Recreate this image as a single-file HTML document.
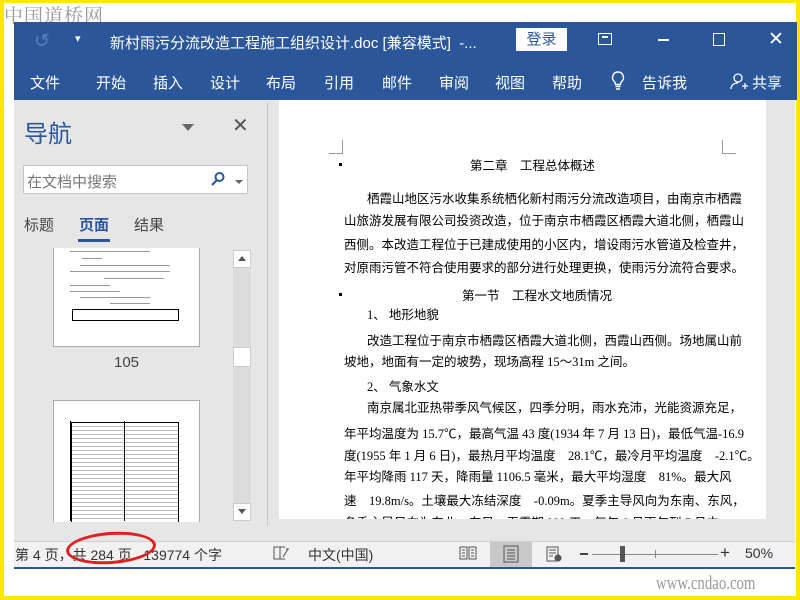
<!DOCTYPE html>
<html><head><meta charset="utf-8"><style>
*{margin:0;padding:0;box-sizing:border-box}
body{width:800px;height:600px;position:relative;overflow:hidden;background:#fff;font-family:"Liberation Sans","Microsoft YaHei","Noto Sans CJK SC",sans-serif}
.a{position:absolute;white-space:nowrap}
.w{color:#fff}
.doc{font-family:"Liberation Serif","Noto Sans CJK SC",sans-serif;font-size:12.5px;color:#000}
.ln{position:absolute;left:344px;width:377px;text-align:justify;text-align-last:justify;white-space:nowrap;line-height:16px}
</style></head><body>
<div class="a" style="left:0;top:0;width:800px;height:600px;border:4px solid #ffe800;border-top:3px solid #ffe800;border-bottom:4px solid #ffe800"></div>
<div class="a" style="left:4px;top:1px;font-size:19px;color:#9a9a9a;font-family:'Noto Serif CJK SC',serif;letter-spacing:1px">中国道桥网</div>
<div class="a" style="left:14px;top:22px;width:783px;height:78px;background:#2b579a"></div>
<div class="a" style="left:34px;top:30px;font-size:19px;color:#5b7fb8">↺</div>
<div class="a w" style="left:75px;top:32px;font-size:11px">▾</div>
<div class="a w" style="left:110px;top:32px;font-size:15px">新村雨污分流改造工程施工组织设计.doc [兼容模式]&nbsp; -...</div>
<div class="a" style="left:516px;top:28px;width:51px;height:23px;background:#fff;color:#2b579a;font-size:15px;text-align:center;line-height:23px">登录</div>
<div class="a" style="left:598px;top:33px;width:14px;height:12px;border:1.5px solid #fff"></div>
<div class="a" style="left:602px;top:36px;width:6px;height:1.5px;background:#fff"></div>
<div class="a" style="left:658px;top:39px;width:11px;height:1.5px;background:#fff"></div>
<div class="a" style="left:713px;top:33px;width:12px;height:13px;border:1.5px solid #fff"></div>
<div class="a w" style="left:768px;top:28px;font-size:19px;font-weight:300">✕</div>
<div class="a w" style="top:72px;font-size:15px;left:30px">文件</div>
<div class="a w" style="top:72px;font-size:15px;left:96px">开始</div>
<div class="a w" style="top:72px;font-size:15px;left:153px">插入</div>
<div class="a w" style="top:72px;font-size:15px;left:210px">设计</div>
<div class="a w" style="top:72px;font-size:15px;left:266px">布局</div>
<div class="a w" style="top:72px;font-size:15px;left:324px">引用</div>
<div class="a w" style="top:72px;font-size:15px;left:382px">邮件</div>
<div class="a w" style="top:72px;font-size:15px;left:439px">审阅</div>
<div class="a w" style="top:72px;font-size:15px;left:495px">视图</div>
<div class="a w" style="top:72px;font-size:15px;left:552px">帮助</div>
<svg class="a" style="left:610px;top:70px" width="16" height="22"><path d="M8 2a5.5 5.5 0 0 0-3.5 9.7c.8.8 1 1.6 1 2.8h5c0-1.2.2-2 1-2.8A5.5 5.5 0 0 0 8 2zM5.5 16.5h5M6 19h4" fill="none" stroke="#fff" stroke-width="1.4"/></svg>
<div class="a w" style="top:72px;font-size:15px;left:642px">告诉我</div>
<svg class="a" style="left:729px;top:72px" width="20" height="20"><circle cx="9" cy="6" r="4" fill="none" stroke="#fff" stroke-width="1.3"/><path d="M2 17c0-4 3-6 7-6M13 14h6M16 11v6" fill="none" stroke="#fff" stroke-width="1.3"/></svg>
<div class="a w" style="top:72px;font-size:15px;left:752px">共享</div>
<div class="a" style="left:14px;top:100px;width:781px;height:441px;background:#e6e6e6"></div>
<div class="a" style="left:267px;top:102px;width:1px;height:424px;background:#c8c8c8"></div>
<div class="a" style="left:24px;top:114px;font-size:24px;color:#2b579a">导航</div>
<div class="a" style="left:182px;top:124px;width:0;height:0;border-left:6px solid transparent;border-right:6px solid transparent;border-top:7px solid #666"></div>
<div class="a" style="left:232px;top:113px;font-size:20px;color:#555">✕</div>
<div class="a" style="left:23px;top:165px;width:225px;height:29px;background:#fff;border:1px solid #c6c6c6"></div>
<div class="a" style="left:27px;top:171px;font-size:15px;color:#777">在文档中搜索</div>
<svg class="a" style="left:210px;top:171px" width="16" height="16"><circle cx="9.5" cy="6" r="4" fill="none" stroke="#2b579a" stroke-width="2"/><path d="M7 9l-5 5" stroke="#2b579a" stroke-width="2.2"/></svg>
<div class="a" style="left:235px;top:180px;border-left:4px solid transparent;border-right:4px solid transparent;border-top:4px solid #666"></div>
<div class="a" style="left:24px;top:214px;font-size:15px;color:#444">标题</div>
<div class="a" style="left:79px;top:214px;font-size:15px;color:#2b579a;font-weight:bold">页面</div>
<div class="a" style="left:134px;top:214px;font-size:15px;color:#444">结果</div>
<div class="a" style="left:78px;top:239px;width:32px;height:3px;background:#2b579a"></div>
<div class="a" style="left:53px;top:248px;width:147px;height:99px;background:#fff;border:1px solid #aaa;border-top:none;overflow:hidden">
<div style="margin:3px 16px;height:1px;background:#999;width:80px"></div>
<div style="margin:6px 28px;height:1px;background:#999;width:20px"></div>
<div style="margin:5px 26px;height:1px;background:#999;width:90px"></div>
<div style="margin:5px 16px;height:1px;background:#999;width:100px"></div>
<div style="margin:6px 50px;height:1px;background:#999;width:60px"></div>
<div style="margin:5px 16px;height:1px;background:#999;width:40px"></div>
<div style="margin:5px 16px;height:1px;background:#999;width:50px"></div>
<div style="margin:5px 26px;height:1px;background:#999;width:70px"></div>
<div style="margin:5px 56px;height:1px;background:#999;width:40px"></div>
<div style="margin:0 18px;height:12px;border:1px solid #000;width:107px"></div>
</div>
<div class="a" style="left:114px;top:354px;font-size:15px;color:#444">105</div>
<div class="a" style="left:53px;top:400px;width:147px;height:122px;background:#fff;border:1px solid #aaa;border-bottom:none;overflow:hidden">
<div style="margin:21px 0 0 17px;width:108px;height:110px;border:1px solid #000;background:repeating-linear-gradient(#fff 0 3px,#bbb 3px 4px)"></div>
</div>
<div class="a" style="left:70px;top:421px;width:1px;height:100px;background:#000"></div>
<div class="a" style="left:124px;top:421px;width:1px;height:100px;background:#000"></div>
<div class="a" style="left:233px;top:250px;width:18px;height:271px;background:#dcdcdc"></div>
<div class="a" style="left:233px;top:250px;width:18px;height:18px;background:#fff;border:1px solid #ccc"></div>
<div class="a" style="left:238px;top:256px;border-left:4px solid transparent;border-right:4px solid transparent;border-bottom:5px solid #555"></div>
<div class="a" style="left:233px;top:347px;width:18px;height:20px;background:#fff;border:1px solid #ccc"></div>
<div class="a" style="left:233px;top:503px;width:18px;height:18px;background:#fff;border:1px solid #ccc"></div>
<div class="a" style="left:238px;top:509px;border-left:4px solid transparent;border-right:4px solid transparent;border-top:5px solid #555"></div>
<div class="a" style="left:279px;top:100px;width:487px;height:419px;background:#fff"></div>
<div class="a" style="left:329px;top:140px;width:14px;height:14px;border-right:1px solid #999;border-bottom:1px solid #999"></div>
<div class="a" style="left:722px;top:140px;width:14px;height:14px;border-left:1px solid #999;border-bottom:1px solid #999"></div>
<div class="a" style="left:339px;top:163px;width:3px;height:3px;background:#000"></div>
<div class="a" style="left:339px;top:293px;width:3px;height:3px;background:#000"></div>
<div class="doc">
<div class="a" style="left:470px;top:155px">第二章　工程总体概述</div>
<div class="ln" style="top:191px;left:367px;width:354px">栖霞山地区污水收集系统栖化新村雨污分流改造项目，由南京市栖霞</div>
<div class="ln" style="top:213px">山旅游发展有限公司投资改造，位于南京市栖霞区栖霞大道北侧，栖霞山</div>
<div class="ln" style="top:237px">西侧。本改造工程位于已建成使用的小区内，增设雨污水管道及检查井，</div>
<div class="ln" style="top:260px">对原雨污管不符合使用要求的部分进行处理更换，使雨污分流符合要求。</div>
<div class="a" style="left:462px;top:285px">第一节　工程水文地质情况</div>
<div class="a" style="left:367px;top:304px">1、 地形地貌</div>
<div class="ln" style="top:333px;left:367px;width:354px">改造工程位于南京市栖霞区栖霞大道北侧，西霞山西侧。场地属山前</div>
<div class="a" style="left:344px;top:351px">坡地，地面有一定的坡势，现场高程 15～31m 之间。</div>
<div class="a" style="left:367px;top:376px">2、 气象水文</div>
<div class="ln" style="top:400px;left:367px;width:354px">南京属北亚热带季风气候区，四季分明，雨水充沛，光能资源充足，</div>
<div class="ln" style="top:426px">年平均温度为 15.7℃，最高气温 43 度(1934 年 7 月 13 日)，最低气温-16.9</div>
<div class="ln" style="top:448px">度(1955 年 1 月 6 日)，最热月平均温度　28.1℃，最冷月平均温度　-2.1℃。</div>
<div class="ln" style="top:469px">年平均降雨 117 天，降雨量 1106.5 毫米，最大平均湿度　81%。最大风</div>
<div class="ln" style="top:493px">速　19.8m/s。土壤最大冻结深度　-0.09m。夏季主导风向为东南、东风，</div>
<div style="position:absolute;left:344px;top:513px;width:377px;height:6px;overflow:hidden"><div class="ln" style="left:0;top:2px">冬季主导风向为东北、东风，无霜期 223 天，每年 6 月下旬到 7 月中旬为</div></div>
</div>
<div class="a" style="left:14px;top:541px;width:781px;height:27px;background:#f1f1f1;border-top:1px solid #d0d0d0"></div>
<div class="a" style="left:14px;top:567px;width:781px;height:2px;background:#2b579a"></div>
<div class="a" style="left:15px;top:545px;font-size:14px;color:#333">第 4 页，共 284 页&nbsp;&nbsp; 139774 个字</div>
<svg class="a" style="left:272px;top:545px" width="18" height="16"><path d="M2 2h6v12H2zM8 2h5M8 14h5M14 4l3 0M11 12l5-8" fill="none" stroke="#555" stroke-width="1"/></svg>
<div class="a" style="left:308px;top:545px;font-size:14px;color:#333">中文(中国)</div>
<svg class="a" style="left:459px;top:545px" width="18" height="16"><path d="M1 2h7v12H1zM10 2h7v12h-7zM3 5h3M3 8h3M3 11h3M12 5h3M12 8h3M12 11h3" fill="none" stroke="#555" stroke-width="1"/></svg>
<div class="a" style="left:490px;top:542px;width:42px;height:25px;background:#c8c8c8"></div>
<svg class="a" style="left:502px;top:545px" width="18" height="18"><path d="M2 1h14v16H2zM5 5h8M5 8h8M5 11h8M5 14h8" fill="none" stroke="#555" stroke-width="1"/></svg>
<svg class="a" style="left:545px;top:545px" width="18" height="18"><path d="M2 2h11v14H2zM4 5h7M4 8h7M4 11h4" fill="none" stroke="#555" stroke-width="1"/><circle cx="13" cy="13" r="3.5" fill="#555"/></svg>
<div class="a" style="left:580px;top:553px;width:8px;height:2px;background:#444"></div>
<div class="a" style="left:592px;top:554px;width:126px;height:1px;background:#888"></div>
<div class="a" style="left:620px;top:546px;width:5px;height:16px;background:#555"></div>
<div class="a" style="left:655px;top:550px;width:1px;height:8px;background:#888"></div>
<div class="a" style="left:720px;top:543px;font-size:17px;color:#333">+</div>
<div class="a" style="left:745px;top:545px;font-size:14px;color:#333">50%</div>
<div class="a" style="left:66px;top:532px;width:90px;height:32px;border:3px solid #e02020;border-radius:50%;transform:rotate(-4deg)"></div>
<div class="a" style="left:656px;top:573px;font-size:19px;color:#999;font-family:'Liberation Serif',serif;transform:scaleX(0.78);transform-origin:left">www.cndao.com</div>
</body></html>
